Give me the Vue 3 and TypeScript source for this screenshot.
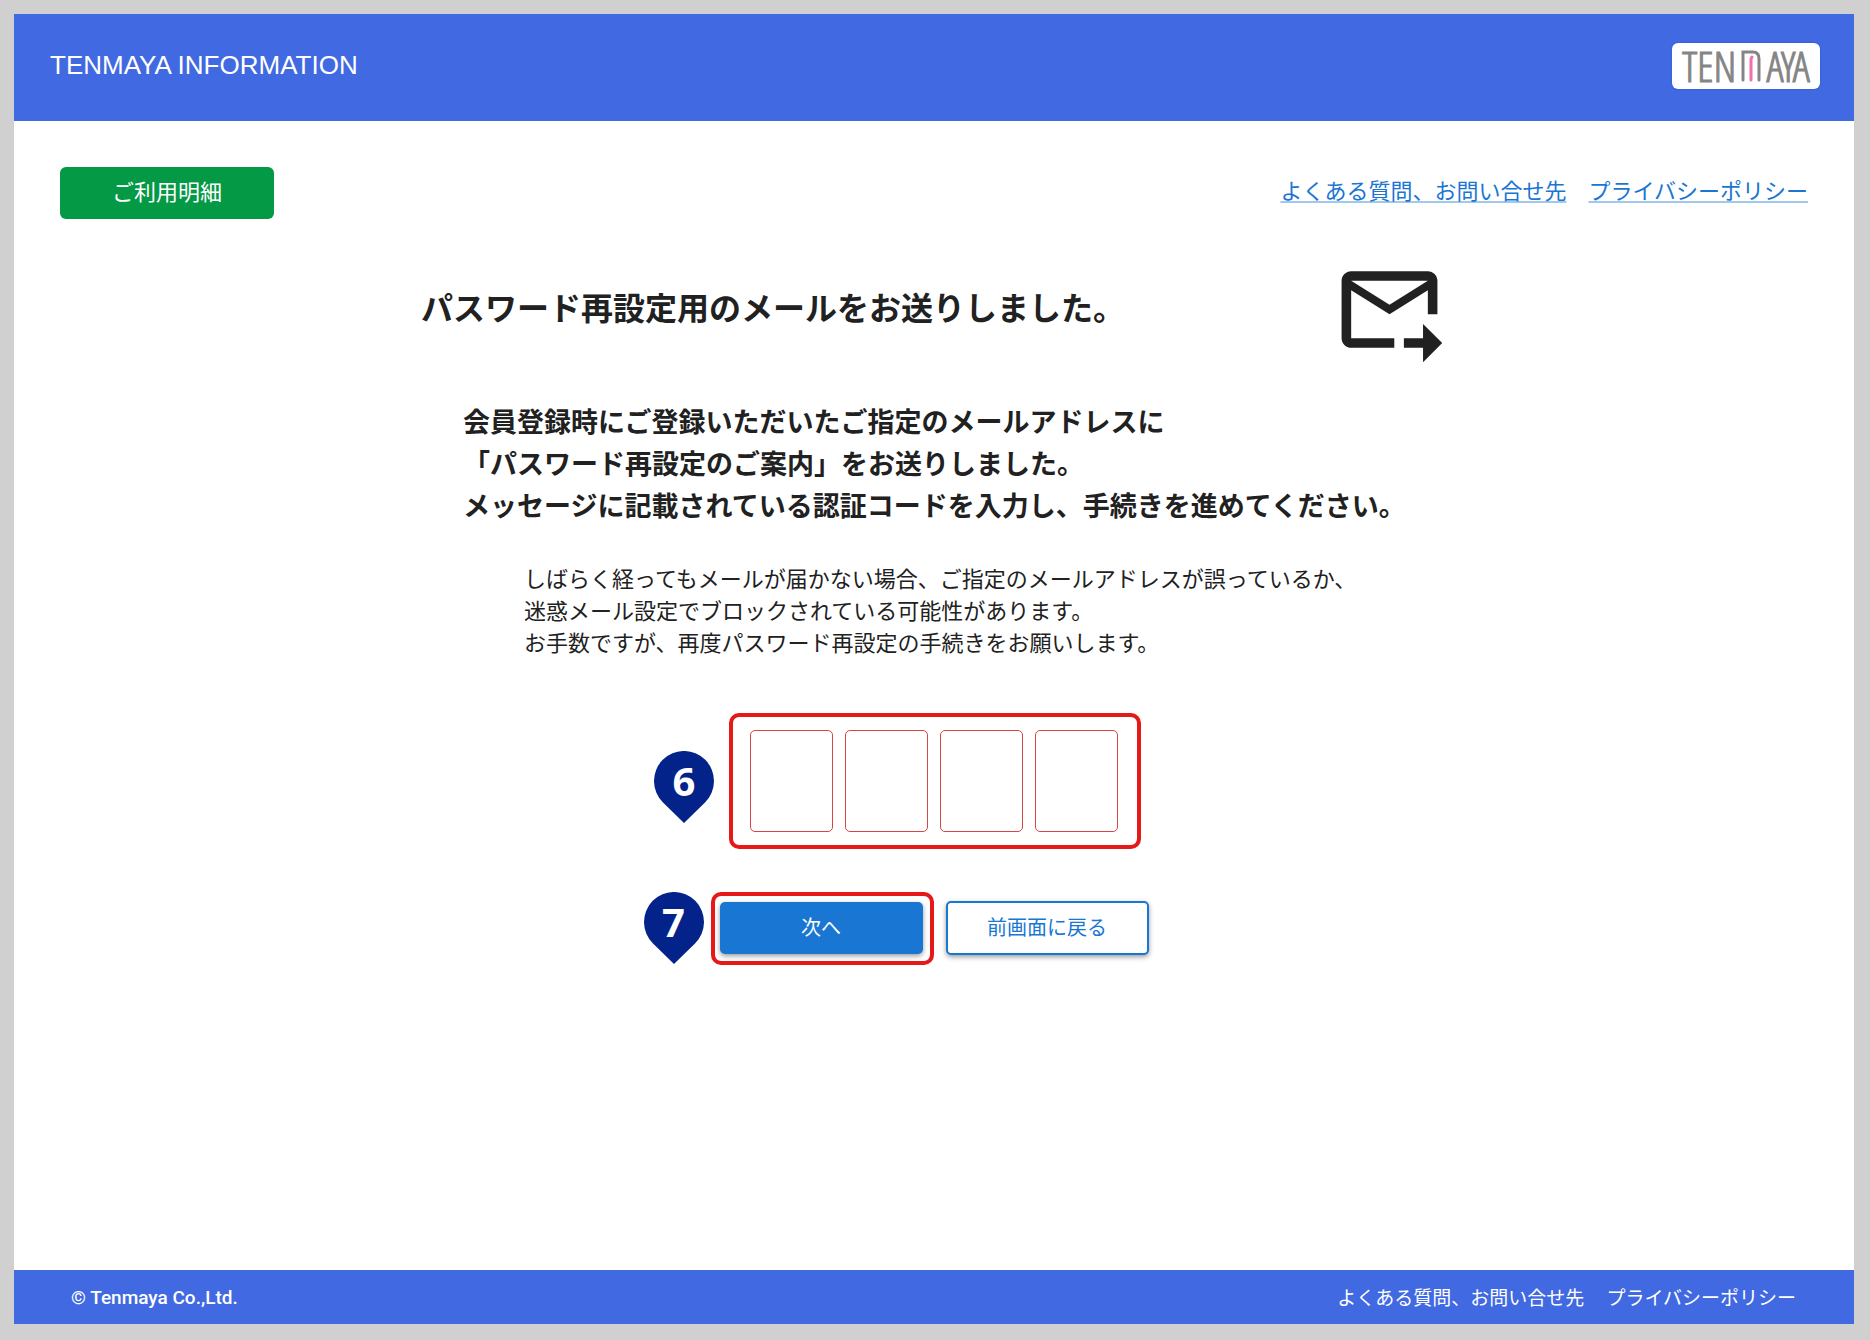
<script setup lang="ts">
import { ref } from 'vue'

interface NavLink {
  label: string
  href: string
}

const links: NavLink[] = [
  { label: 'よくある質問、お問い合せ先', href: '#faq' },
  { label: 'プライバシーポリシー', href: '#privacy' },
]

const code = ref<string[]>(['', '', '', ''])
</script>

<template>
  <div class="page">
    <div class="frame">
      <header class="header">
        <div class="title">TENMAYA INFORMATION</div>
        <div class="logo" aria-label="TENMAYA">
          <span>TEN</span>
          <svg class="logo-mark" width="20" height="32" viewBox="0 0 20 32" fill="none" stroke-linecap="round" aria-hidden="true">
            <path d="M2 30V2H12Q18 2 18 9V30" stroke="#858585" stroke-width="3" />
            <path d="M10 30V9L11 7" stroke="#f26fae" stroke-width="3" />
          </svg>
          <span>AYA</span>
        </div>
      </header>

      <main class="main">
        <nav class="nav">
          <button type="button" class="statement">ご利用明細</button>
          <div class="nav-links">
            <a v-for="link in links" :key="link.href" :href="link.href">{{ link.label }}</a>
          </div>
        </nav>

        <section class="content">
          <div class="heading">
            <h1>パスワード再設定用のメールをお送りしました。</h1>
            <svg class="mail" viewBox="0 0 24 24" fill="#212121" aria-hidden="true">
              <path d="M20 4H4c-1.1 0-2 .9-2 2v12c0 1.100.9 2 2 2h9v-2H4V8l8 5 8-5v5h2V6c0-1.100-.9-2-2-2zm-8 7L4 6h16l-8 5zm7 4l4 4-4 4v-3h-4v-2h4v-3z" />
            </svg>
          </div>

          <p class="lead">
            会員登録時にご登録いただいたご指定のメールアドレスに<br />
            「パスワード再設定のご案内」をお送りしました。<br />
            メッセージに記載されている認証コードを入力し、手続きを進めてください。
          </p>

          <p class="note">
            しばらく経ってもメールが届かない場合、ご指定のメールアドレスが誤っているか、<br />
            迷惑メール設定でブロックされている可能性があります。<br />
            お手数ですが、再度パスワード再設定の手続きをお願いします。
          </p>

          <div class="code">
            <input
              v-for="(_, i) in code"
              :key="i"
              v-model="code[i]"
              type="text"
              inputmode="numeric"
              maxlength="1"
              :aria-label="`認証コード ${i + 1}桁目`"
            />
            <div class="outline outline-code"></div>
            <div class="pin pin-code">
              <svg viewBox="0 0 60 72" aria-hidden="true"><path d="M30 72L9 51.4A30 30 0 1 1 51 51.4Z" fill="#04238a" /></svg>
              <span>6</span>
            </div>
          </div>

          <div class="actions">
            <div class="next-wrap">
              <button type="button" class="next">次へ</button>
              <div class="outline outline-next"></div>
              <div class="pin pin-next">
                <svg viewBox="0 0 60 72" aria-hidden="true"><path d="M30 72L9 51.4A30 30 0 1 1 51 51.4Z" fill="#04238a" /></svg>
                <span>7</span>
              </div>
            </div>
            <button type="button" class="back">前画面に戻る</button>
          </div>
        </section>
      </main>

      <footer class="footer">
        <small>© Tenmaya Co.,Ltd.</small>
        <div class="footer-links">
          <a v-for="link in links" :key="link.href" :href="link.href">{{ link.label }}</a>
        </div>
      </footer>
    </div>
  </div>
</template>

<style>
body {
  margin: 0;
  background: #d0d0d0;
}
</style>

<style scoped>
.page {
  box-sizing: border-box;
  min-height: 100vh;
  display: flex;
  padding: 14px 16px 16px 14px;
  background: #d0d0d0;
  color: #212121;
  font-family: 'Noto Sans CJK JP', sans-serif;
}

button,
input {
  box-sizing: border-box;
  margin: 0;
  padding: 0;
  font-family: inherit;
}

.frame {
  flex: 1;
  display: flex;
  flex-direction: column;
  background: #fff;
}

.header {
  box-sizing: border-box;
  height: 107px;
  padding: 0 34px 4px 36px;
  display: flex;
  align-items: center;
  justify-content: space-between;
  background: #4169e1;
}

.title {
  padding-bottom: 2px;
  color: #fff;
  font: 26px/32px 'Liberation Sans', Arial, sans-serif;
}

.logo {
  box-sizing: border-box;
  width: 148px;
  height: 46px;
  display: flex;
  align-items: center;
  justify-content: center;
  gap: 5px;
  border-radius: 6px;
  background: #fff;
  color: #858585;
  font: 300 43px/44px 'Open Sans Condensed Light', 'Open Sans Condensed', 'Liberation Sans', sans-serif;
  -webkit-text-stroke: 1px #858585;
  box-shadow: 0 0 2px #2450dc;
}

.logo-mark {
  flex: none;
}

.main {
  flex: 1;
  padding-bottom: 60px;
}

.nav {
  display: flex;
  justify-content: space-between;
  padding: 46px 46px 0;
}

.statement {
  width: 214px;
  height: 52px;
  padding-bottom: 6px;
  border: 0;
  border-radius: 6px;
  background: #039945;
  color: #fff;
  font-size: 22px;
}

.nav-links {
  display: flex;
  gap: 22px;
  padding-top: 6px;
}

.nav-links a {
  color: #1976d2;
  font-size: 22px;
  line-height: 32px;
  text-decoration-color: #a3c8ed;
  text-underline-offset: 2px;
}

.content {
  max-width: 1026px;
  margin: 33px auto 0;
}

.heading {
  display: flex;
  align-items: center;
  justify-content: space-between;
}

h1 {
  margin: 0;
  padding-bottom: 8px;
  font-size: 32px;
  font-weight: 700;
  line-height: 48px;
}

.mail {
  width: 115px;
  height: 115px;
}

.lead {
  margin: 33px 0 0;
  padding-left: 42px;
  font-size: 27px;
  font-weight: 700;
  line-height: 42px;
}

.note {
  margin: 35px 0 0;
  padding-left: 103px;
  font-size: 22px;
  line-height: 32px;
}

.code {
  position: relative;
  width: fit-content;
  margin: 73px auto 0;
  display: flex;
  gap: 12px;
}

.code input {
  width: 83px;
  height: 102px;
  border: 1px solid #d84545;
  border-radius: 5px;
  background: #fff;
  text-align: center;
  font-size: 32px;
}

.outline {
  position: absolute;
  border: 4px solid #e61919;
  border-radius: 10px;
  pointer-events: none;
}

.outline-code {
  inset: -17px -23px -17px -21px;
}

.outline-next {
  inset: -10px -11px -11px -9px;
}

.pin {
  position: absolute;
  width: 60px;
  height: 72px;
  color: #fff;
  text-align: center;
  font: 700 40px/60px 'Open Sans', sans-serif;
}

.pin svg {
  position: absolute;
  inset: 0;
}

.pin span {
  position: relative;
}

.pin-code {
  top: 21px;
  left: -96px;
}

.pin-next {
  top: -10px;
  left: -76px;
}

.actions {
  margin-top: 69px;
  display: flex;
  align-items: center;
  justify-content: center;
  gap: 23px;
}

.next-wrap {
  position: relative;
  display: flex;
}

.next,
.back {
  width: 203px;
  height: 52px;
  padding-bottom: 3px;
  border: 0;
  border-radius: 5px;
  font-size: 20px;
  box-shadow: 0 2px 5px rgba(0, 0, 0, 0.4);
}

.next {
  background: #1976d2;
  color: #fff;
}

.back {
  height: 54px;
  border: 2px solid #1976d2;
  background: #fff;
  color: #1976d2;
}

.footer {
  box-sizing: border-box;
  height: 54px;
  padding: 0 58px 0 57px;
  display: flex;
  align-items: center;
  justify-content: space-between;
  background: #4169e1;
  color: #fff;
  font-size: 19px;
}

.footer small {
  padding-top: 2px;
  font: 500 19px/28px Roboto, sans-serif;
}

.footer-links {
  display: flex;
  gap: 22px;
}

.footer-links a {
  color: #fff;
  line-height: 28px;
  text-decoration: none;
}
</style>
